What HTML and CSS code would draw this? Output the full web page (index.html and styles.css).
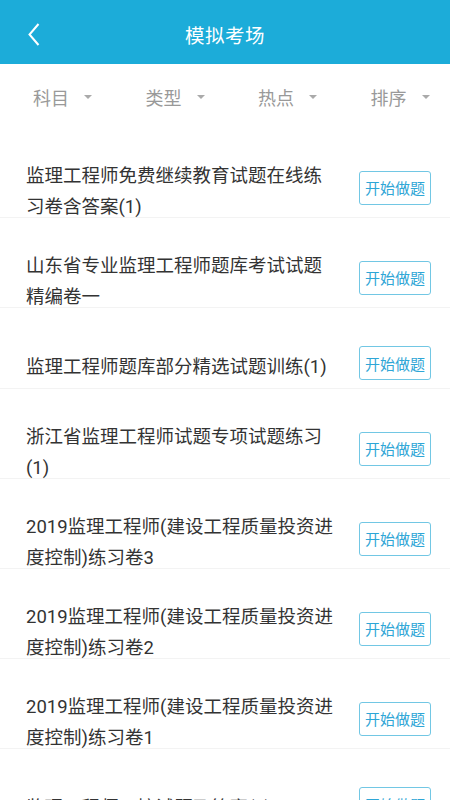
FILE: index.html
```html
<!DOCTYPE html>
<html>
    <head>
      <title>模拟考场</title>
      <meta charset='utf-8'>
      <link rel="stylesheet" href="styles.css">
    </head>
    <body>
      <!--barra superior-->
      <div class="cabecera">
         <span class="volver">
            <svg width="12" height="23" viewBox="0 0 12 23"><polyline points="10.5,1 1.5,11.5 10.5,22" fill="none" stroke="#fff" stroke-width="2"/></svg>
         </span>
         <h1>模拟考场</h1>
         <span></span>
      </div>

      <!--filtros-->
      <div class="filtros">
         <div class="filtro">科目<i class="flecha"></i></div>
         <div class="filtro">类型<i class="flecha"></i></div>
         <div class="filtro">热点<i class="flecha"></i></div>
         <div class="filtro">排序<i class="flecha"></i></div>
      </div>

      <!--lista de examenes-->
      <ul class="lista">
         <li class="examen"><p class="titulo">监理工程师免费继续教育试题在线练习卷含答案(1)</p><div class="accion"><button class="boton">开始做题</button></div></li>
         <li class="examen"><p class="titulo">山东省专业监理工程师题库考试试题精编卷一</p><div class="accion"><button class="boton">开始做题</button></div></li>
         <li class="examen"><p class="titulo">监理工程师题库部分精选试题训练(1)</p><div class="accion"><button class="boton">开始做题</button></div></li>
         <li class="examen"><p class="titulo">浙江省监理工程师试题专项试题练习(1)</p><div class="accion"><button class="boton">开始做题</button></div></li>
         <li class="examen"><p class="titulo">2019监理工程师(建设工程质量投资进度控制)练习卷3</p><div class="accion"><button class="boton">开始做题</button></div></li>
         <li class="examen"><p class="titulo">2019监理工程师(建设工程质量投资进度控制)练习卷2</p><div class="accion"><button class="boton">开始做题</button></div></li>
         <li class="examen"><p class="titulo">2019监理工程师(建设工程质量投资进度控制)练习卷1</p><div class="accion"><button class="boton">开始做题</button></div></li>
         <li class="examen"><p class="titulo">监理工程师三控试题及答案(1)</p><div class="accion"><button class="boton">开始做题</button></div></li>
      </ul>
    </body>
</html>
```

FILE: styles.css
```css
* {font-family: Roboto, "Noto Sans CJK SC", sans-serif; box-sizing: border-box;}
body {margin: 0; width: 450px; height: 800px; overflow: hidden; background-color: #fff;}

/* cabecera */
.cabecera {display: grid; grid-template-columns: 60px 1fr 60px; align-items: center; height: 64px; background-color: #1cacd9; color: #fff;}
.cabecera h1 {margin: 0; padding-top: 5px; text-align: center; font-size: 19.5px; font-weight: normal; letter-spacing: 0.5px;}
.volver {display: flex; padding-left: 28px; padding-top: 4px;}

/* filtros */
.filtros {display: grid; grid-template-columns: repeat(4, 1fr); height: 64px; align-items: center;}
.filtro {display: flex; align-items: center; padding-left: 33px; padding-top: 2px; font-size: 18px; color: #999;}
.flecha {display: block; margin-left: 15px; width: 0; height: 0; border-left: 4px solid transparent; border-right: 4px solid transparent; border-top: 4px solid #aaa;}

/* lista */
.lista {list-style: none; margin: 0; padding: 0;}
.examen {display: flex; align-items: center; padding: 30px 19px 0 26px; border-bottom: 1px solid #f3f3f3;}
.titulo {width: 312px; margin: 0 0 -6px 0; padding-top: 3px; font-size: 18.5px; line-height: 31px; color: #333;}
.accion {display: flex; align-items: center; justify-content: flex-end; flex: 1; min-height: 50px;}
.boton {width: 72px; height: 34px; padding: 0; border: 1px solid #72c7e4; border-radius: 3px; background-color: #fff; color: #2fa6d6; font-size: 15px;}
```
